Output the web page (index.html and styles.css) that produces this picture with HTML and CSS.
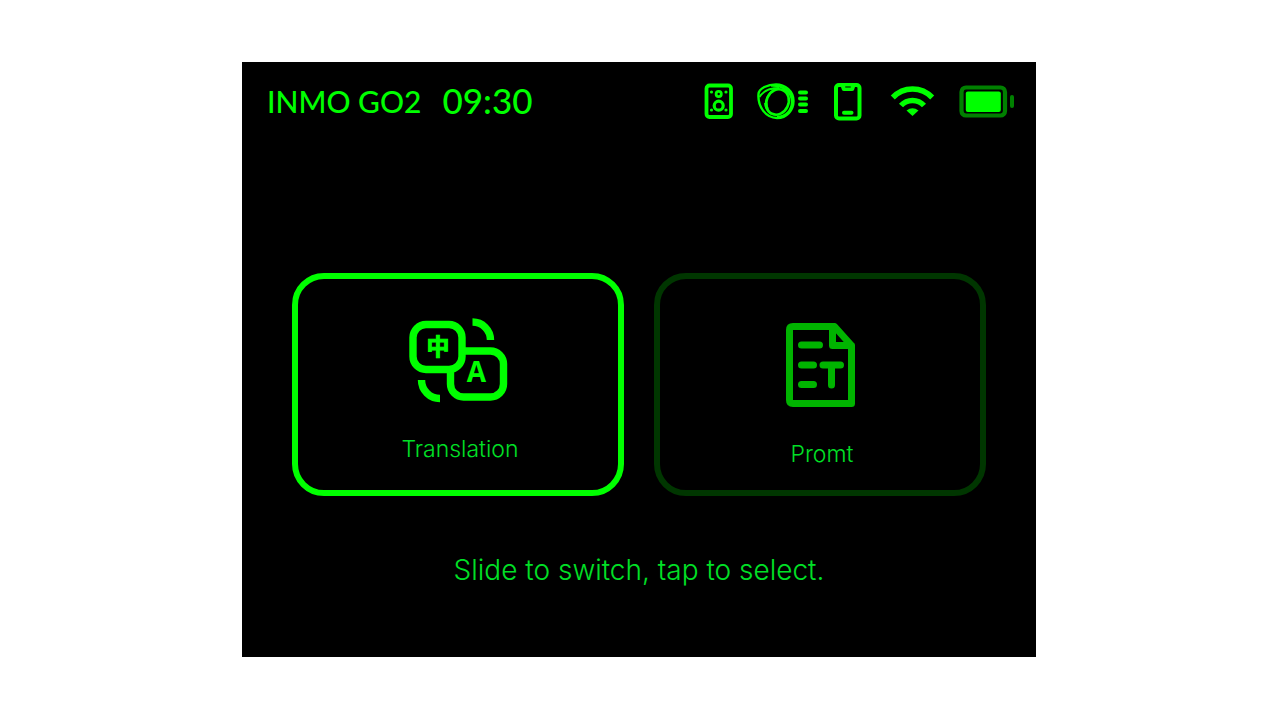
FILE: index.html
```html
<!DOCTYPE html>
<html lang="en">
<head>
<meta charset="utf-8">
<title>INMO GO2</title>
<link rel="stylesheet" href="styles.css">
</head>
<body>
<main class="screen">
  <header class="status">
    <h1 class="device">INMO GO2</h1>
    <time class="clock" datetime="09:30">09:30</time>
    <div class="icons">
      <svg width="30" height="40" viewBox="704 82 30 40" role="img" aria-label="Speaker" fill="none" stroke="#0f0">
        <rect x="706.5" y="85.5" width="24.5" height="31.5" rx="3" stroke-width="3.8"/>
        <circle cx="718.7" cy="94" r="2.6" stroke-width="2.8"/>
        <circle cx="718.7" cy="105.7" r="4.5" stroke-width="3.2"/>
        <g fill="#0f0" stroke="none"><circle cx="711.5" cy="92" r="1.6"/><circle cx="726" cy="92" r="1.6"/><circle cx="711.5" cy="110" r="1.6"/><circle cx="726" cy="110" r="1.6"/></g>
      </svg>
      <svg width="54" height="40" viewBox="756 82 54 40" role="img" aria-label="Ring" fill="none" stroke="#0f0">
        <path d="M758.5 94C757.5 107 766 118 777 118C787 118 793.5 110 793.5 101C793.5 91 785 84.500 776 84.500C768 84.500 759 88 758.5 94Z" stroke-width="2.4"/>
        <path d="M771 85.500C783 85 792 92 792 102C792 110 786 117 777 117" stroke-width="2.4"/>
        <ellipse cx="777.5" cy="102" rx="11" ry="13" transform="rotate(25 777.5 102)" stroke-width="2.6"/>
        <path d="M759.5 97C763 91 771 88 779 88M768 109C764 101 768 93 774 90M771 114C767 111 765 107 765 103" stroke-width="1.8"/>
        <path d="M800 92.5H806M800 98.5H806M800 104.5H806M800 111H806" stroke-width="4" stroke-linecap="round"/>
      </svg>
      <svg width="32" height="40" viewBox="832 82 32 40" role="img" aria-label="Phone" fill="none" stroke="#0f0">
        <rect x="836" y="85" width="23.5" height="33.5" rx="3" stroke-width="4"/>
        <path d="M840 84H856L854 90Q853.5 91 852 91H844Q842.5 91 842 90Z" fill="#0f0" stroke="none"/>
        <path d="M846 87H850" stroke="#008000" stroke-width="2" stroke-linecap="round"/>
        <path d="M844 112.7H851.5" stroke-width="4" stroke-linecap="round"/>
      </svg>
      <svg width="50" height="40" viewBox="886 82 50 40" role="img" aria-label="Wi-Fi" fill="none" stroke="#0f0" stroke-width="5.5">
        <path d="M892.8 97.5A27 27 0 0 1 932.2 97.5M901 105.5A15.5 15.5 0 0 1 924 105.5"/>
        <path d="M906.5 110.5Q912.5 106 918.5 110.5L912.5 116Z" fill="#0f0" stroke="none"/>
      </svg>
      <svg width="58" height="40" viewBox="958 82 58 40" role="img" aria-label="Battery" fill="none">
        <rect x="961.5" y="87.5" width="43.5" height="28" rx="4.5" stroke="#008000" stroke-width="4.2"/>
        <rect x="965.8" y="91.5" width="35" height="20.5" rx="2" fill="#0f0"/>
        <rect x="1010" y="95" width="4" height="13" rx="2" fill="#008000"/>
      </svg>
    </div>
  </header>
  <nav class="cards" aria-label="Apps">
    <button class="card card-active" type="button">
      <svg width="120" height="100" viewBox="400 310 120 100" aria-hidden="true" fill="none" stroke="#0f0" stroke-width="7.4">
        <rect x="450.5" y="351" width="53" height="46" rx="13"/>
        <rect x="413" y="324.5" width="49" height="45" rx="13" fill="#000"/>
        <path d="M472.5 322A18 18 0 0 1 490.5 340M421.5 380A18.5 18.5 0 0 0 440 398.5"/>
        <text class="glyph-zh" x="438" y="355">中</text>
        <text class="glyph-a" x="476.5" y="382">A</text>
      </svg>
      <span class="label">Translation</span>
    </button>
    <button class="card" type="button">
      <svg class="doc" width="110" height="100" viewBox="767 315 110 100" aria-hidden="true" fill="none" stroke="#00b400" stroke-width="7" stroke-linejoin="round" stroke-linecap="round">
        <path d="M834.5 326.5H793Q789.5 326.5 789.5 330V400Q789.5 403.5 793 403.5H851.5V345.5ZM832.5 327V345.5H851.5"/>
        <path d="M801.5 345H819.5M801.5 365H813.5M801.5 384.5H813.5M823 365H840.5M831.5 365V385"/>
      </svg>
      <span class="label">Promt</span>
    </button>
  </nav>
  <p class="hint">Slide to switch, tap to select.</p>
</main>
</body>
</html>
```
FILE: styles.css
```css
* { box-sizing: border-box; }

body {
  margin: 0;
  min-height: 100vh;
  padding: 62px 244px 63px 242px;
  display: flex;
  background: #fff;
  font-family: Inter, "Liberation Sans", sans-serif;
}

.screen {
  flex: 1;
  display: flex;
  flex-direction: column;
  background: #000;
  color: #0f0;
}

.status {
  display: flex;
  align-items: flex-start;
  padding: 20px 20px 0 25px;
  height: 60px;
}

.device {
  margin: 0;
  font-family: Lato, sans-serif;
  font-size: 30px;
  font-weight: 500;
  line-height: 38px;
}

.clock {
  margin-left: 21px;
  font-family: Lato, sans-serif;
  font-size: 35px;
  font-weight: 500;
  line-height: 36px;
}

.icons {
  display: flex;
  gap: 22px;
  margin-left: auto;
}

.cards {
  display: grid;
  grid-template-columns: 1fr 1fr;
  gap: 30px;
  margin-top: 151px;
  padding: 0 50px;
}

.card {
  display: flex;
  flex-direction: column;
  align-items: center;
  height: 223px;
  padding: 31px 0 0 4px;
  border: 6px solid #003600;
  border-radius: 32px;
  background: #000;
  color: #00e026;
  font: inherit;
}

.card-active { border-color: #0f0; }

.doc { margin-top: 5px; }

.label {
  margin-top: 24px;
  font-size: 23px;
  font-weight: 300;
  line-height: 30px;
}

.hint {
  margin: 56px 0 0;
  color: #00e026;
  font-size: 28px;
  font-weight: 300;
  line-height: 36px;
  text-align: center;
}

.glyph-zh, .glyph-a {
  fill: #0f0;
  text-anchor: middle;
  font-weight: 700;
}

.glyph-zh {
  stroke: #0f0;
  stroke-width: 1px;
  font-family: "Noto Sans CJK SC", sans-serif;
  font-size: 23px;
}

.glyph-a {
  stroke: none;
  font-family: "Open Sans", sans-serif;
  font-size: 28px;
}
```
